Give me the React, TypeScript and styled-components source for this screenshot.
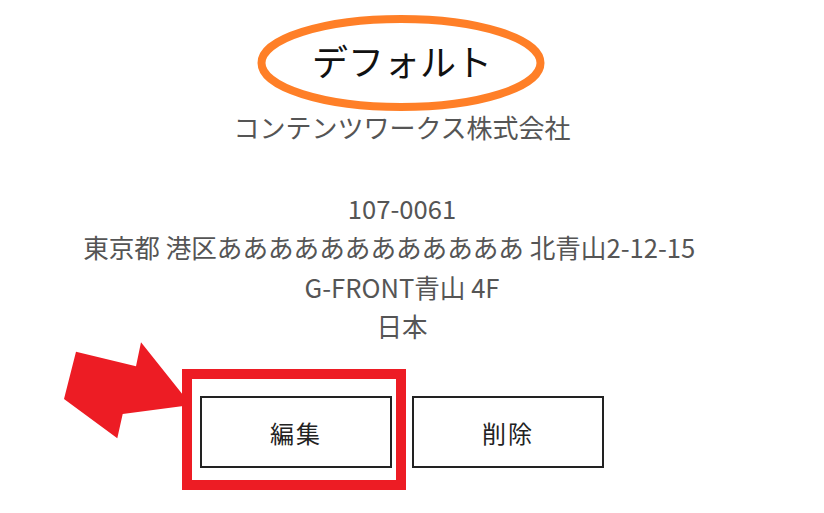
import React from "react";
import styled, { createGlobalStyle } from "styled-components";

const GlobalStyle = createGlobalStyle`
  html, body {
    margin: 0;
    padding: 0;
    background: #ffffff;
  }
  body {
    font-family: "Noto Sans CJK JP", "Noto Sans", sans-serif;
  }
`;

const Page = styled.div`
  width: 804px;
  min-height: 513px;
  box-sizing: border-box;
  padding-top: 33px;
  padding-bottom: 40px;
  display: flex;
  flex-direction: column;
  align-items: center;
  text-align: center;
`;

const TitleWrap = styled.div`
  position: relative;
  display: inline-block;
`;

const Title = styled.h2`
  margin: 0;
  font-size: 36px;
  line-height: 54px;
  font-weight: 400;
  color: #111111;
`;

const Ellipse = styled.svg`
  position: absolute;
  left: calc(50% - 147px);
  top: -20px;
  pointer-events: none;
`;

const Company = styled.div`
  margin-top: 19px;
  font-size: 26px;
  line-height: 42px;
  color: #555555;
`;

const Address = styled.div`
  margin-top: 40px;
  display: flex;
  flex-direction: column;
  align-items: center;
`;

const AddressLine = styled.div`
  font-size: 25.6px;
  line-height: 39.3px;
  color: #555555;
  white-space: pre;
`;

const ButtonRow = styled.div`
  margin-top: 51px;
  display: flex;
  gap: 20px;
`;

const ButtonSlot = styled.div`
  position: relative;
`;

const ActionButton = styled.button`
  display: block;
  width: 192px;
  height: 72px;
  box-sizing: border-box;
  border: 2px solid #222222;
  background: #ffffff;
  font-family: "Noto Sans CJK JP", "Noto Sans", sans-serif;
  font-size: 24px;
  letter-spacing: 2px;
  color: #222222;
  padding: 0;
  cursor: pointer;
`;

const Highlight = styled.div`
  position: absolute;
  left: -18px;
  top: -27px;
  width: 224px;
  height: 121px;
  box-sizing: border-box;
  border: 10px solid #ed1c24;
  pointer-events: none;
`;

const Arrow = styled.svg`
  position: absolute;
  left: -140px;
  top: -57px;
  pointer-events: none;
`;

export default function App() {
  return (
    <>
      <GlobalStyle />
      <Page>
        <TitleWrap>
          <Title>デフォルト</Title>
          <Ellipse width="292" height="100" viewBox="0 0 292 100">
            <ellipse
              cx="146"
              cy="50"
              rx="139.5"
              ry="44"
              fill="none"
              stroke="#ff7f27"
              strokeWidth="8"
            />
          </Ellipse>
        </TitleWrap>
        <Company>コンテンツワークス株式会社</Company>
        <Address>
          <AddressLine>107-0061</AddressLine>
          <AddressLine>東京都 港区ああああああああああああ 北青山2-12-15　</AddressLine>
          <AddressLine>G-FRONT青山 4F</AddressLine>
          <AddressLine>日本</AddressLine>
        </Address>
        <ButtonRow>
          <ButtonSlot>
            <Arrow width="140" height="105" viewBox="0 0 140 105">
              <polygon
                points="16,12.7 76,27.3 81,3.3 131,66 62.7,75 57.3,99.3 4,60"
                fill="#ed1c24"
              />
            </Arrow>
            <ActionButton>編集</ActionButton>
            <Highlight />
          </ButtonSlot>
          <ButtonSlot>
            <ActionButton>削除</ActionButton>
          </ButtonSlot>
        </ButtonRow>
      </Page>
    </>
  );
}
